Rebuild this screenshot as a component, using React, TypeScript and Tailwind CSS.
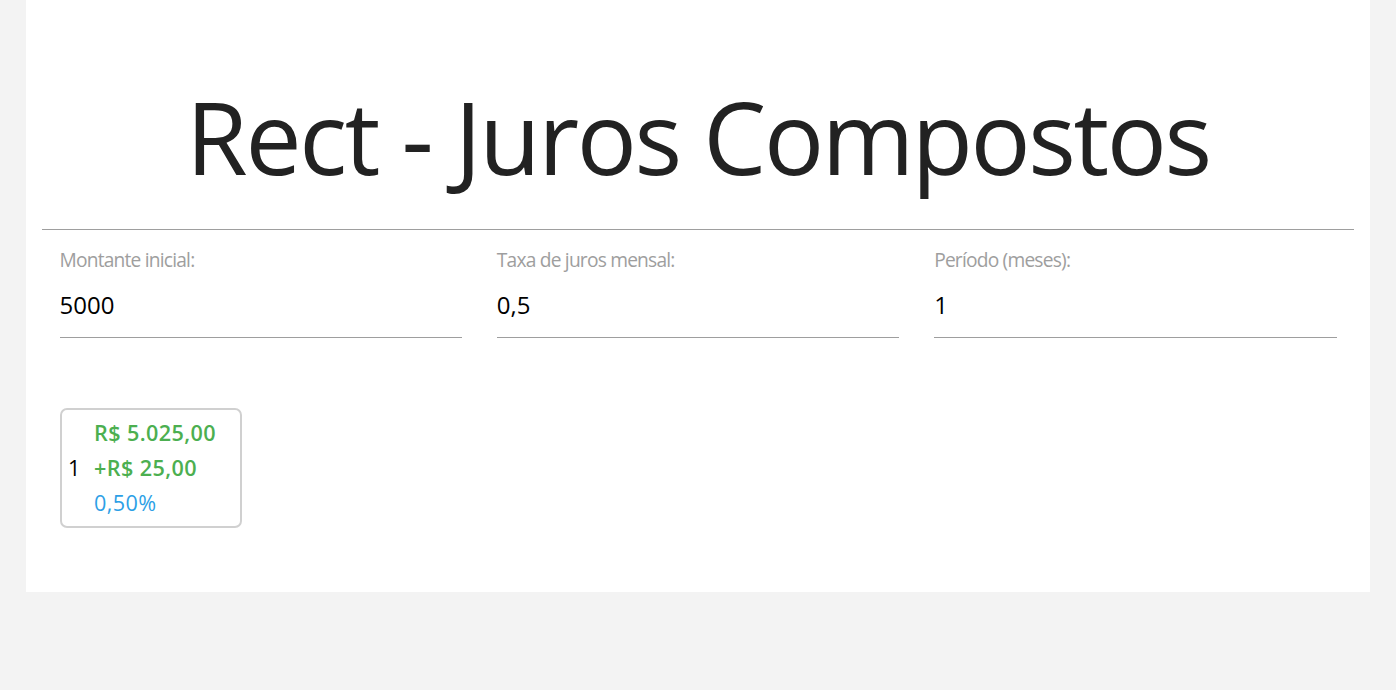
const fields = [
  { label: "Montante inicial:", value: "5000" },
  { label: "Taxa de juros mensal:", value: "0,5" },
  { label: "Período (meses):", value: "1" },
];

export default function App() {
  return (
    <div className="min-h-[690px] bg-[#f3f3f3] font-['Open_Sans',sans-serif] text-[#212121]">
      <div className="mx-[26px] bg-white px-4 pb-[64px]">
        <h1 className="pt-[81px] text-center text-[100px] leading-[110px] font-normal tracking-[-2.4px] text-[#222]">
          Rect - Juros Compostos
        </h1>
        <hr className="mt-[38px] border-t border-[#9e9e9e]" />

        <div className="grid grid-cols-3">
          {fields.map((f) => (
            <div key={f.label} className="px-[17.5px] pt-[17.5px]">
              <label className="block text-[19.2px] leading-[24px] tracking-[-0.8px] text-[#9e9e9e]">
                {f.label}
              </label>
              <input
                readOnly
                value={f.value}
                className="mt-[8.5px] box-border h-[58px] w-full border-b border-[#9e9e9e] bg-transparent pb-[9px] text-[24px] text-black outline-none"
              />
            </div>
          ))}
        </div>

        <div className="mt-[70px] px-[18px]">
          <div className="flex w-[182px] items-center rounded-[7px] border-2 border-[#d0d0d0] pt-[5px] pb-[6px] pl-[6px] text-[21.6px] leading-[35px]">
            <div className="w-[26px] text-black">1</div>
            <div className="tracking-[0.4px]">
              <div className="font-semibold text-[#4caf50]">R$ 5.025,00</div>
              <div className="font-semibold text-[#4caf50]">+R$ 25,00</div>
              <div className="text-[#2d9fe6]">0,50%</div>
            </div>
          </div>
        </div>
      </div>
    </div>
  );
}
